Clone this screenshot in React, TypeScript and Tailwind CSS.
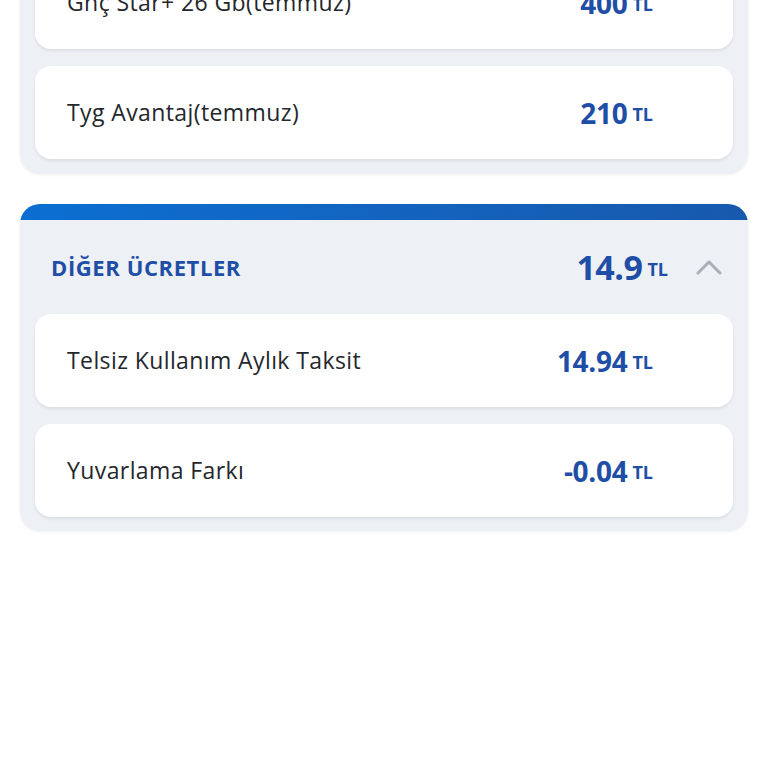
import React from "react";

const font = { fontFamily: '"Open Sans", "Noto Sans", sans-serif' };

function Row({ label, amount }: { label: string; amount: string }) {
  return (
    <div className="flex h-[93px] items-center justify-between rounded-[16px] bg-white pl-[32px] pr-[80px] shadow-[0_2px_3px_rgba(30,40,60,0.08)]">
      <span className="text-[23px] tracking-[0.4px] text-[#24272c]">{label}</span>
      <span className="flex items-baseline gap-[5px] text-[#1f4ea6]">
        <span className="text-[28px] font-bold tracking-[-0.3px]">{amount}</span>
        <span className="relative top-[-3px] text-[18px] font-bold">TL</span>
      </span>
    </div>
  );
}

export default function App() {
  return (
    <div className="min-h-[768px] overflow-hidden bg-white" style={font}>
      <div className="mx-[20px] mt-[-60px] flex flex-col gap-[17px] rounded-b-[20px] bg-[#edf0f4] px-[15px] pb-[15px] pt-[16px] shadow-[0_1px_3px_rgba(30,40,60,0.06)]">
        <Row label="Gnç Star+ 26 Gb(temmuz)" amount="400" />
        <Row label="Tyg Avantaj(temmuz)" amount="210" />
      </div>

      <div className="mx-[20px] mt-[30px] overflow-hidden rounded-[20px] bg-[#edf0f4] shadow-[0_1px_3px_rgba(30,40,60,0.06)]">
        <div className="h-[16px] bg-gradient-to-r from-[#0a6fd2] to-[#1759ad]" />
        <div className="flex h-[94px] items-center justify-between pl-[31px] pr-[26px]">
          <span className="text-[22px] font-bold tracking-[0.6px] text-[#1f4ea6]">DİĞER ÜCRETLER</span>
          <div className="flex items-center">
            <span className="flex items-baseline gap-[5px] text-[#1f4ea6]">
              <span className="text-[34px] font-bold tracking-[-0.5px]">14.9</span>
              <span className="relative top-[-4px] text-[18px] font-bold">TL</span>
            </span>
            <svg className="ml-[28px]" width="26" height="16" viewBox="0 0 26 16" fill="none">
              <path d="M2 14 L13 3 L24 14" stroke="#a9aeb8" strokeWidth="3" strokeLinecap="round" strokeLinejoin="round" />
            </svg>
          </div>
        </div>
        <div className="flex flex-col gap-[17px] px-[15px] pb-[14px]">
          <Row label="Telsiz Kullanım Aylık Taksit" amount="14.94" />
          <Row label="Yuvarlama Farkı" amount="-0.04" />
        </div>
      </div>
    </div>
  );
}
